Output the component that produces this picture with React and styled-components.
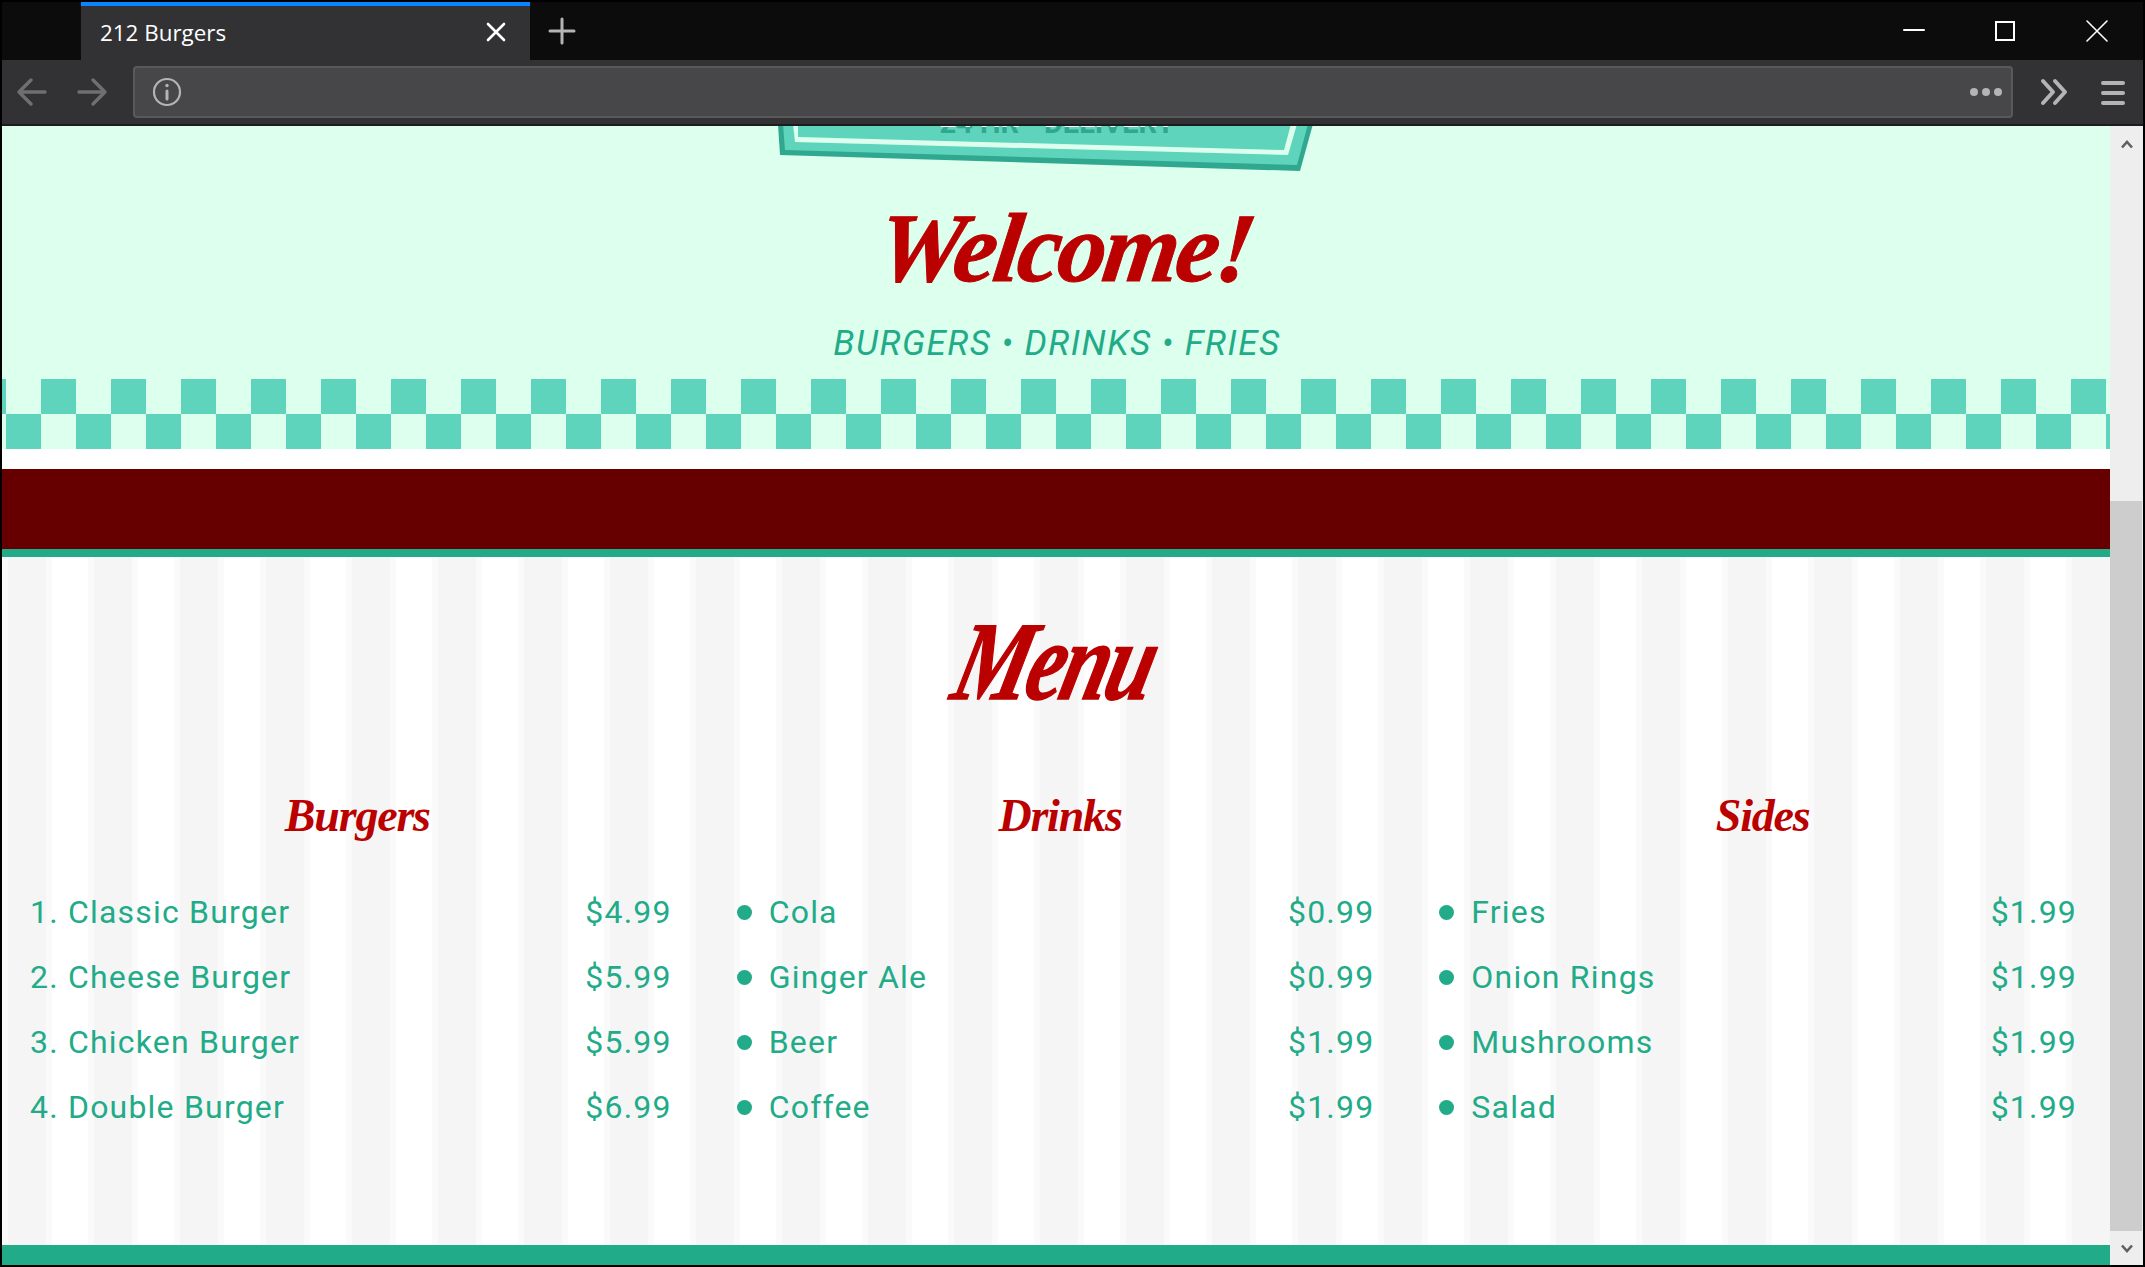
import React from 'react';
import styled, { createGlobalStyle } from 'styled-components';

const GlobalStyle = createGlobalStyle`
  html, body {
    margin: 0;
    padding: 0;
    overflow: hidden;
    background: #000;
  }
`;

const TEAL = '#22ab88';
const RED = '#bb0000';
const SCRIPT = '"Liberation Serif", "DejaVu Serif", serif';
const BODY = 'Roboto, "Noto Sans", sans-serif';

const Win = styled.div`
  width: 2145px;
  height: 1267px;
  box-sizing: border-box;
  padding: 2px;
  background: #000;
  display: flex;
  flex-direction: column;
  overflow: hidden;
`;

const TabBar = styled.div`
  height: 58px;
  flex: none;
  background: #0c0c0c;
  display: flex;
  align-items: stretch;
  padding-left: 79px;
`;

const Tab = styled.div`
  width: 449px;
  box-sizing: border-box;
  background: #323234;
  border-top: 4px solid #0a84ff;
  padding: 0 24px 2px 19px;
  display: flex;
  align-items: center;
  justify-content: space-between;
  color: #fff;
  font: 22.4px "Open Sans", sans-serif;
`;

const NewTab = styled.div`
  margin-left: 18px;
  display: flex;
  align-items: center;
`;

const WinControls = styled.div`
  margin-left: auto;
  display: flex;
  align-items: center;
  gap: 69px;
  padding-right: 34px;
`;

const ToolBar = styled.div`
  height: 66px;
  flex: none;
  box-sizing: border-box;
  background: #323234;
  border-bottom: 2px solid #1c1c1e;
  display: flex;
  align-items: center;
  padding: 0 17px 0 14px;
`;

const NavIcons = styled.div`
  width: 117px;
  display: flex;
  gap: 28px;
`;

const UrlField = styled.div`
  width: 1880px;
  height: 52px;
  box-sizing: border-box;
  background: #474749;
  border: 2px solid #59595b;
  border-radius: 4px;
  display: flex;
  align-items: center;
  justify-content: space-between;
  padding: 0 8px 0 17px;
`;

const ToolRight = styled.div`
  margin-left: auto;
  display: flex;
  align-items: center;
  gap: 32px;
`;

const Viewport = styled.div`
  flex: 1;
  display: flex;
  min-height: 0;
`;

const Page = styled.div`
  width: 2108px;
  flex: none;
  display: flex;
  flex-direction: column;
`;

const Hero = styled.header`
  height: 253px;
  flex: none;
  background: #ddffee;
  display: flex;
  flex-direction: column;
  align-items: center;
`;

const Sign = styled.svg`
  flex: none;
  display: block;
  margin-left: -12px;
`;

const Welcome = styled.h1`
  margin: 23px 0 0 18px;
  font: italic 700 98px/98px ${SCRIPT};
  letter-spacing: -3px;
  color: ${RED};
  -webkit-text-stroke: 1px ${RED};
  transform: skewX(-8deg) scaleX(0.99);
`;

const Tagline = styled.p`
  margin: 27px 0 0 2px;
  font: italic 400 35px/40px ${BODY};
  letter-spacing: 1.5px;
  color: ${TEAL};
`;

const Checker = styled.div`
  height: 70px;
  flex: none;
  background-color: #ddffee;
  background-image:
    linear-gradient(90deg, #5fd4bd 50%, transparent 50%),
    linear-gradient(90deg, #5fd4bd 50%, transparent 50%);
  background-size: 70px 35px;
  background-position: 39px 0, 4px 35px;
  background-repeat: repeat-x;
`;

const Gap = styled.div`
  height: 20px;
  flex: none;
  background: #fff;
`;

const Banner = styled.div`
  height: 80px;
  flex: none;
  background: #660000;
  border-bottom: 8px solid ${TEAL};
`;

const MenuArea = styled.main`
  flex: 1;
  background: repeating-linear-gradient(
    90deg,
    #fafafa 0 6px,
    #f5f5f5 6px 44px,
    #fafafa 44px 50px,
    #fff 50px 86px
  );
  display: flex;
  flex-direction: column;
  align-items: center;
`;

const MenuTitle = styled.h2`
  margin: 48px 0 0;
  font: italic 700 112px/112px ${SCRIPT};
  letter-spacing: -4px;
  color: ${RED};
  -webkit-text-stroke: 1.5px ${RED};
  transform: skewX(-14deg) scaleX(0.76);
`;

const Columns = styled.div`
  width: 100%;
  margin-top: 69px;
  display: grid;
  grid-template-columns: repeat(3, 1fr);
`;

const Column = styled.section`
  display: flex;
  flex-direction: column;
`;

const ColumnTitle = styled.h3`
  margin: 0 0 34px;
  padding-left: 8px;
  text-align: center;
  font: italic 700 46px/60px ${SCRIPT};
  letter-spacing: -1.2px;
  color: ${RED};
`;

const Item = styled.div`
  height: 65px;
  box-sizing: border-box;
  padding: 0 33px 0 ${({ $bullet }) => ($bullet ? '32px' : '28px')};
  display: flex;
  align-items: center;
  justify-content: space-between;
  font: 400 32px/65px ${BODY};
  letter-spacing: 1.2px;
  color: ${TEAL};
`;

const ItemName = styled.span`
  display: flex;
  align-items: center;
  gap: 17px;
`;

const Bullet = styled.i`
  width: 15px;
  height: 15px;
  border-radius: 50%;
  background: ${TEAL};
`;

const Footer = styled.footer`
  height: 20px;
  flex: none;
  background: ${TEAL};
`;

const ScrollBar = styled.div`
  width: 33px;
  flex: none;
  background: #eeeeee;
  position: relative;
`;

const ScrollThumb = styled.div`
  position: absolute;
  left: 0;
  right: 1px;
  top: 375px;
  height: 730px;
  background: #cdcdcd;
`;

const ScrollArrow = styled.svg`
  position: absolute;
  left: 11px;
  top: ${({ $down }) => ($down ? '1118px' : '14px')};
`;

const Line = ({ d, size = 32, color = '#fff', width = 2 }) => (
  <svg width={size} height={size} viewBox={`0 0 ${size} ${size}`} fill="none" stroke={color} strokeWidth={width} strokeLinecap="round" strokeLinejoin="round">
    <path d={d} />
  </svg>
);

const burgers = [
  ['1. Classic Burger', '$4.99'],
  ['2. Cheese Burger', '$5.99'],
  ['3. Chicken Burger', '$5.99'],
  ['4. Double Burger', '$6.99'],
];
const drinks = [
  ['Cola', '$0.99'],
  ['Ginger Ale', '$0.99'],
  ['Beer', '$1.99'],
  ['Coffee', '$1.99'],
];
const sides = [
  ['Fries', '$1.99'],
  ['Onion Rings', '$1.99'],
  ['Mushrooms', '$1.99'],
  ['Salad', '$1.99'],
];

const MenuColumn = ({ title, items, bullet }) => (
  <Column>
    <ColumnTitle>{title}</ColumnTitle>
    {items.map(([name, price]) => (
      <Item key={name} $bullet={bullet}>
        <ItemName>
          {bullet && <Bullet />}
          {name}
        </ItemName>
        <span>{price}</span>
      </Item>
    ))}
  </Column>
);

export default function App() {
  return (
    <Win>
      <GlobalStyle />
      <TabBar>
        <Tab>
          212 Burgers
          <Line size={20} width={2.6} d="M2 2 L18 18 M18 2 L2 18" />
        </Tab>
        <NewTab>
          <Line size={28} width={3} color="#b4b4b4" d="M14 2 V26 M2 14 H26" />
        </NewTab>
        <WinControls>
          <Line size={22} width={2} d="M1 10 H21" />
          <svg width="22" height="22" viewBox="0 0 22 22" fill="none" stroke="#fff" strokeWidth="2"><rect x="2" y="2" width="18" height="18" /></svg>
          <Line size={24} width={1.6} d="M2 2 L22 22 M22 2 L2 22" />
        </WinControls>
      </TabBar>
      <ToolBar>
        <NavIcons>
          <Line size={32} width={3.4} color="#6f6f71" d="M3 16 H29 M15 4 L3 16 L15 28" />
          <Line size={32} width={3.4} color="#6f6f71" d="M3 16 H29 M17 4 L29 16 L17 28" />
        </NavIcons>
        <UrlField>
          <svg width="30" height="30" viewBox="0 0 30 30" fill="none" stroke="#b4b4b4" strokeWidth="2.2" strokeLinecap="round">
            <circle cx="15" cy="15" r="13" />
            <path d="M15 14 V22" strokeWidth="3" />
            <path d="M15 8.5 V8.6" strokeWidth="3.4" />
          </svg>
          <svg width="34" height="10" viewBox="0 0 34 10" fill="#b4b4b4">
            <circle cx="5" cy="5" r="4" />
            <circle cx="17" cy="5" r="4" />
            <circle cx="29" cy="5" r="4" />
          </svg>
        </UrlField>
        <ToolRight>
          <Line size={28} width={4} color="#b4b4b4" d="M3 3 L13 14 L3 25 M15 3 L25 14 L15 25" />
          <Line size={26} width={4} color="#b4b4b4" d="M3 4 H23 M3 14 H23 M3 24 H23" />
        </ToolRight>
      </ToolBar>
      <Viewport>
        <Page>
          <Hero>
            <Sign width="560" height="50" viewBox="0 0 560 50">
              <polygon points="8,-2 10,29 530,45 543,-2" fill="#30a78f" />
              <polygon points="13,-2 15,24 527,39 538,-2" fill="#5fd4bd" />
              <polygon points="23,-2 25,16 518,29 527,-2" fill="#ddffee" />
              <polygon points="28,-2 28,11 514,24 521,-2" fill="#5fd4bd" />
              <text x="287" y="7" textAnchor="middle" textLength="235" lengthAdjust="spacingAndGlyphs" fontFamily="Roboto, sans-serif" fontWeight="700" fontSize="30" fill="#30a78f">24 HR • DELIVERY</text>
              <text x="287" y="1" textAnchor="middle" textLength="235" lengthAdjust="spacingAndGlyphs" fontFamily="Roboto, sans-serif" fontWeight="700" fontSize="30" fill="#ffffff">24 HR • DELIVERY</text>
            </Sign>
            <Welcome>Welcome!</Welcome>
            <Tagline>BURGERS • DRINKS • FRIES</Tagline>
          </Hero>
          <Checker />
          <Gap />
          <Banner />
          <MenuArea>
            <MenuTitle>Menu</MenuTitle>
            <Columns>
              <MenuColumn title="Burgers" items={burgers} />
              <MenuColumn title="Drinks" items={drinks} bullet />
              <MenuColumn title="Sides" items={sides} bullet />
            </Columns>
          </MenuArea>
          <Footer />
        </Page>
        <ScrollBar>
          <ScrollThumb />
          <ScrollArrow width="12" height="9" viewBox="0 0 12 9" fill="none" stroke="#606060" strokeWidth="2.6">
            <path d="M1 7.5 L6 2 L11 7.5" />
          </ScrollArrow>
          <ScrollArrow $down width="12" height="9" viewBox="0 0 12 9" fill="none" stroke="#606060" strokeWidth="2.6">
            <path d="M1 1.5 L6 7 L11 1.5" />
          </ScrollArrow>
        </ScrollBar>
      </Viewport>
    </Win>
  );
}
